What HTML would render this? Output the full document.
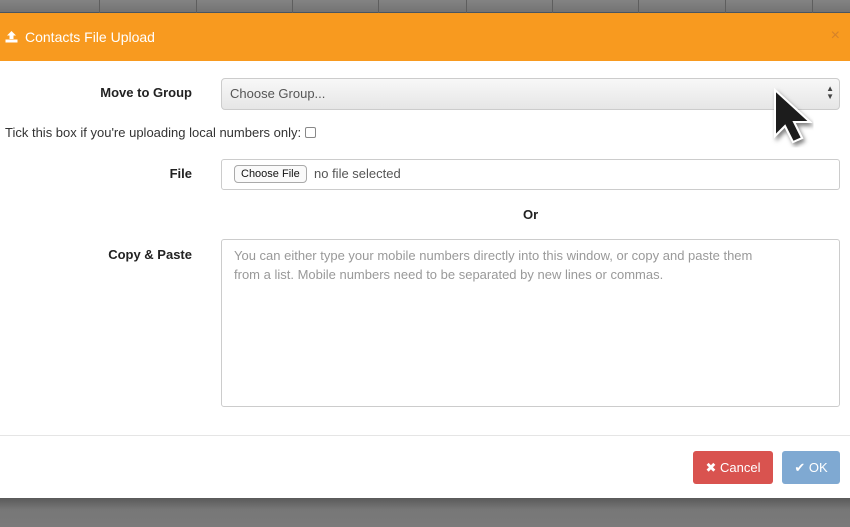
<!DOCTYPE html>
<html><head><meta charset="utf-8"><style>
*{box-sizing:border-box;margin:0;padding:0}
body{width:850px;height:527px;overflow:hidden;background:#6e6e6e;font-family:"Liberation Sans",sans-serif;position:relative}
.top{position:absolute;left:0;top:0;width:850px;height:13px;background:linear-gradient(#838383,#737373);border-bottom:1px solid #4a5560}
.div{position:absolute;top:0;height:13px;width:1px;background:#5e5e5e}
.hdr{position:absolute;left:0;top:13px;width:850px;height:48px;background:#f89a1f;color:#fff;font-size:14px}
.hdr .t{position:absolute;left:25px;top:16px}
.hdr .x{position:absolute;right:10px;top:14px;color:#d5822a;font-size:16px}
.body{position:absolute;left:0;top:61px;width:850px;height:437px;background:#fff}
.bot{position:absolute;left:0;top:498px;width:850px;height:29px;background:linear-gradient(#5a5a5a,#777 40%,#7a7a7a)}
.lbl{position:absolute;font-weight:bold;font-size:13px;color:#222;text-align:right}
.sel{position:absolute;left:221px;top:17px;width:619px;height:32px;border:1px solid #ccc;border-radius:4px;background:linear-gradient(#f8f8f8,#e6e6e6);color:#555;font-size:13px;padding:7px 8px}
.inp{position:absolute;left:221px;border:1px solid #ccc;border-radius:3px;background:#fff}
.btn{position:absolute;top:390px;height:33px;border-radius:3px;color:#fff;font-size:13px;text-align:center;line-height:33px}
</style></head><body>
<div class="top"></div>
<div class="div" style="left:99px"></div><div class="div" style="left:196px"></div><div class="div" style="left:292px"></div><div class="div" style="left:378px"></div><div class="div" style="left:466px"></div><div class="div" style="left:552px"></div><div class="div" style="left:638px"></div><div class="div" style="left:725px"></div><div class="div" style="left:812px"></div>
<div class="hdr">
<svg style="position:absolute;left:5px;top:17px" width="13" height="13" viewBox="0 0 13 13"><path d="M6.5 1 L11 5.5 H8.5 V9 H4.5 V5.5 H2 Z" fill="#fff"/><rect x="0.5" y="9.5" width="12" height="3" fill="#fff"/></svg>
<span class="t">Contacts File Upload</span><span class="x">×</span></div>
<div class="body">
<div class="lbl" style="left:0;width:192px;top:24px">Move to Group</div>
<div class="sel">Choose Group...<span style="position:absolute;right:5px;top:6px;font-size:8px;line-height:8px;color:#444">▲<br>▼</span></div>
<div style="position:absolute;left:5px;top:64px;font-size:13px;color:#333">Tick this box if you're uploading local numbers only: <span style="display:inline-block;width:11px;height:11px;border:1px solid #888;border-radius:2px;vertical-align:-1px"></span></div>
<div class="lbl" style="left:0;width:192px;top:105px">File</div>
<div class="inp" style="top:98px;height:31px;width:619px"><span style="position:absolute;left:12px;top:5px;border:1px solid #aaa;border-radius:4px;font-size:11px;padding:2px 6px;background:#fafafa;color:#111">Choose File</span><span style="position:absolute;left:92px;top:6px;font-size:13px;color:#555">no file selected</span></div>
<div class="lbl" style="left:523px;top:146px">Or</div>
<div class="lbl" style="left:0;width:192px;top:186px">Copy &amp; Paste</div>
<div class="inp" style="top:178px;height:168px;width:619px;padding:6px 80px 6px 12px;font-size:13px;line-height:19px;color:#999">You can either type your mobile numbers directly into this window, or copy and paste them from a list. Mobile numbers need to be separated by new lines or commas.</div>
<div style="position:absolute;left:0;top:374px;width:850px;height:1px;background:#e5e5e5"></div>
<div class="btn" style="left:693px;width:80px;background:#d9534f">✖ Cancel</div>
<div class="btn" style="left:782px;width:58px;background:#7fa9d2">✔ OK</div>
</div>
<div class="bot"></div>
<svg style="position:absolute;left:770px;top:86px" width="48" height="62" viewBox="0 0 48 62"><defs><filter id="s"><feDropShadow dx="2" dy="3" stdDeviation="2" flood-opacity="0.5"/></filter></defs><path d="M5 4 L5 50 L15 40 L23 56 L32 52 L24 36 L40 36 Z" fill="#1a1a1a" stroke="#fff" stroke-width="2" filter="url(#s)"/></svg>
</body></html>
